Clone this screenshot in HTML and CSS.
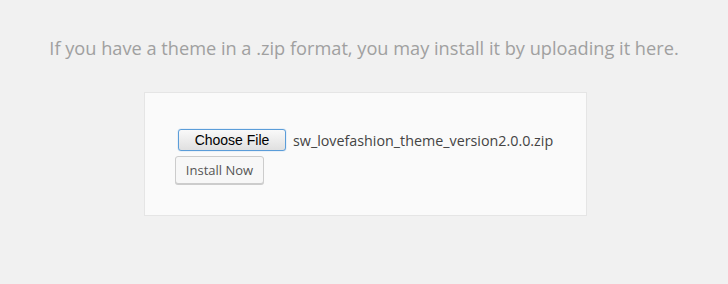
FILE: index.html
```html
<!DOCTYPE html>
<html lang="en">
<head>
    <meta charset="UTF-8">
    <title>Upload Theme</title>
    <link rel="stylesheet" href="styles.css">
</head>
<body>
    <div class="upload-theme">
        <p class="install-help">If you have a theme in a .zip format, you may install it by uploading it here.</p>
        <form class="upload-form">
            <div class="file-row">
                <span class="file-btn">Choose File</span>
                <span class="file-name">sw_lovefashion_theme_version2.0.0.zip</span>
            </div>
            <button type="button" class="button">Install Now</button>
        </form>
    </div>
</body>
</html>
```

FILE: styles.css
```css
* {
    margin: 0;
    padding: 0;
    box-sizing: border-box;
}
body {
    background: #f1f1f1;
    font-family: "Open Sans", sans-serif;
    color: #444;
    height: 284px;
}
.upload-theme {
    padding-top: 36px;
}
.install-help {
    font-size: 18.2px;
    line-height: 24px;
    color: #a0a0a0;
    text-align: center;
}
.upload-form {
    width: 443px;
    height: 124px;
    margin: 32px 0 0 144px;
    padding: 36px 0 0 30px;
    background: #fafafa;
    border: 1px solid #e5e5e5;
}
.file-row {
    display: flex;
    align-items: center;
    margin-left: 3px;
}
.file-btn {
    width: 108px;
    height: 22px;
    border: 1px solid #5b9dd9;
    border-radius: 3px;
    box-shadow: 0 0 1px #5b9dd9;
    background: linear-gradient(#f9f9f9, #e0e0e0);
    font: 14px/20px "Liberation Sans", Arial, sans-serif;
    color: #000;
    text-align: center;
}
.file-name {
    margin-left: 7px;
    font-size: 14.3px;
    color: #444;
}
.button {
    display: block;
    margin-top: 5px;
    width: 89px;
    height: 28px;
    font: 13px/26px "Open Sans", sans-serif;
    white-space: nowrap;
    text-align: center;
    color: #555;
    background: #f7f7f7;
    border: 1px solid #ccc;
    border-radius: 3px;
    box-shadow: 0 1px 0 #ccc;
}
```
